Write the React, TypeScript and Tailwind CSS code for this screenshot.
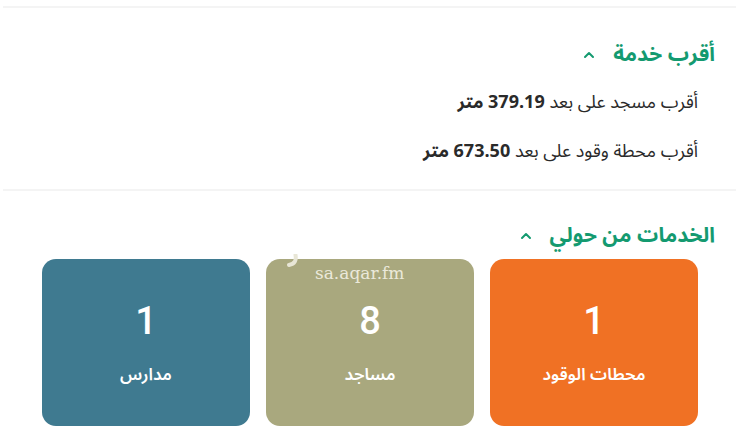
import { ChevronUp } from 'lucide-react';

const cards = [
  { count: 1, label: 'محطات الوقود', color: 'bg-[#f07124]' },
  { count: 8, label: 'مساجد', color: 'bg-[#a9a87e]', watermark: true },
  { count: 1, label: 'مدارس', color: 'bg-[#3f7a90]' },
];

function SectionTitle({ title }: { title: string }) {
  return (
    <div className="flex items-center gap-4 text-[#149a70]">
      <h2 className="text-[21px] font-bold leading-none">{title}</h2>
      <ChevronUp size={16} strokeWidth={3} />
    </div>
  );
}

export default function App() {
  return (
    <div
      dir="rtl"
      className="w-[750px] h-[432px] bg-white overflow-hidden"
      style={{ fontFamily: '"Noto Sans Arabic", "Noto Sans", "DejaVu Sans", sans-serif' }}
    >
      <div className="mt-[6px] ml-[3px] mr-[14px] border-t-2 border-[#f4f4f4]" />

      <section className="pr-[35px] pt-[36px]">
        <SectionTitle title="أقرب خدمة" />
        <div className="pr-[17px] pt-[28px] text-[18px] text-[#2a2a2a] leading-none">
          <p>
            أقرب مسجد على بعد <span className="font-bold text-[18px]">379.19</span> <span className="font-bold">متر</span>
          </p>
          <p className="mt-[31px]">
            أقرب محطة وقود على بعد <span className="font-bold text-[18px]">673.50</span> <span className="font-bold">متر</span>
          </p>
        </div>
      </section>

      <div className="mt-[29px] ml-[3px] mr-[14px] border-t-2 border-[#f4f4f4]" />

      <section className="pr-[35px] pt-[34px]">
        <SectionTitle title="الخدمات من حولي" />
      </section>

      <div className="grid grid-cols-3 gap-[16px] pr-[52px] pl-[42px] pt-[13px]">
        {cards.map((c) => (
          <div
            key={c.label}
            className={`relative h-[167px] rounded-[14px] ${c.color} flex flex-col items-center justify-center text-white`}
          >
            {c.watermark && (
              <>
                <svg className="absolute -top-[5px] left-[20px]" width="14" height="14" viewBox="0 0 14 14">
                  <path d="M9.5 1 C10.5 6 9 10 3 11" stroke="#e8e6d6" strokeWidth="4" fill="none" strokeLinecap="round" />
                </svg>
                <div
                  dir="ltr"
                  className="absolute top-[2px] left-[49px] text-[17px] text-[#ebe9da]"
                  style={{ fontFamily: '"DejaVu Serif", serif' }}
                >
                  sa.aqar.fm
                </div>
              </>
            )}
            <div className="text-[38px] leading-none font-medium" style={{ fontFamily: 'Roboto, sans-serif' }}>
              {c.count}
            </div>
            <div className="mt-[27px] text-[17px] font-semibold leading-none">{c.label}</div>
          </div>
        ))}
      </div>
    </div>
  );
}
